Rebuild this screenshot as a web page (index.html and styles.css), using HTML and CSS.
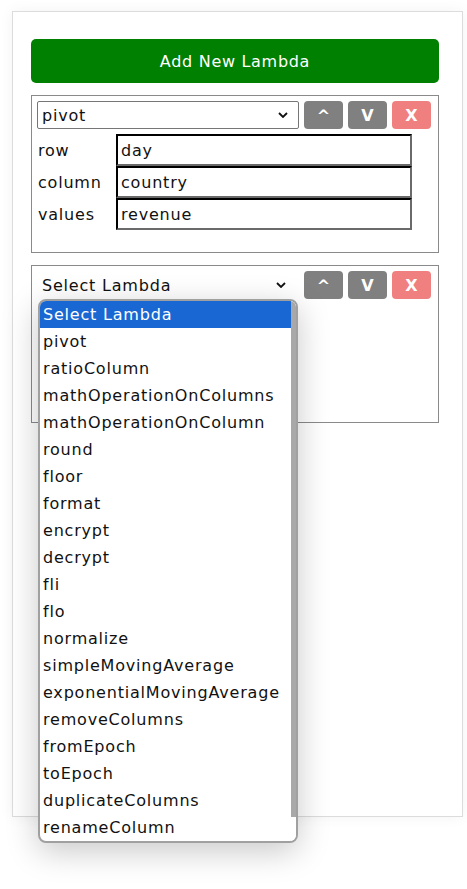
FILE: index.html
```html
<!DOCTYPE html>
<html>
<head>
<meta charset="utf-8">
<link rel="stylesheet" href="styles.css">
</head>
<body>
<div class="panel">
  <button class="add-btn">Add New Lambda</button>

  <div class="card">
    <div class="head">
      <div class="select">
        <span>pivot</span>
        <svg class="chev" width="10" height="6" viewBox="0 0 10 6"><polyline points="1,1 5,5 9,1" fill="none" stroke="#111" stroke-width="1.8"/></svg>
      </div>
      <button class="ctl">^</button>
      <button class="ctl">V</button>
      <button class="ctl del">X</button>
    </div>
    <div class="params">
      <div class="row"><span class="lbl">row</span><div class="inp">day</div></div>
      <div class="row"><span class="lbl">column</span><div class="inp">country</div></div>
      <div class="row"><span class="lbl">values</span><div class="inp">revenue</div></div>
    </div>
  </div>

  <div class="card card2">
    <div class="head">
      <div class="select open">
        <span>Select Lambda</span>
        <svg class="chev" width="10" height="6" viewBox="0 0 10 6"><polyline points="1,1 5,5 9,1" fill="none" stroke="#111" stroke-width="1.8"/></svg>
      </div>
      <button class="ctl">^</button>
      <button class="ctl">V</button>
      <button class="ctl del">X</button>
    </div>
  </div>
</div>

<div class="dropdown">
  <div class="opts">
    <div class="opt sel">Select Lambda</div>
    <div class="opt">pivot</div>
    <div class="opt">ratioColumn</div>
    <div class="opt">mathOperationOnColumns</div>
    <div class="opt">mathOperationOnColumn</div>
    <div class="opt">round</div>
    <div class="opt">floor</div>
    <div class="opt">format</div>
    <div class="opt">encrypt</div>
    <div class="opt">decrypt</div>
    <div class="opt">fli</div>
    <div class="opt">flo</div>
    <div class="opt">normalize</div>
    <div class="opt">simpleMovingAverage</div>
    <div class="opt">exponentialMovingAverage</div>
    <div class="opt">removeColumns</div>
    <div class="opt">fromEpoch</div>
    <div class="opt">toEpoch</div>
    <div class="opt">duplicateColumns</div>
    <div class="opt">renameColumn</div>
  </div>
  <div class="scroll"><div class="thumb"></div></div>
</div>
</body>
</html>
```

FILE: styles.css
```css
* { box-sizing: border-box; }
html, body { margin: 0; padding: 0; background: #fff; }
body {
  font-family: "DejaVu Sans", "Open Sans", sans-serif;
  letter-spacing: 0.8px;
  color: #111;
  width: 467px;
  height: 889px;
  overflow: hidden;
  position: relative;
}
.panel {
  margin: 11px 0 0 12px;
  width: 451px;
  height: 806px;
  border: 1px solid #dcdcdc;
  box-shadow: 0 0 14px rgba(0,0,0,0.05);
  padding: 27px 0 0 18px;
  display: flex;
  flex-direction: column;
  gap: 12px;
}
.add-btn {
  width: 408px;
  height: 44px;
  background: #008000;
  color: #fff;
  border: none;
  border-radius: 5px;
  font-family: inherit;
  font-size: 16px;
  letter-spacing: 0.7px;
  font-weight: 500;
  padding: 0;
}
.card {
  width: 408px;
  height: 158px;
  border: 1px solid #8a8a8a;
  padding: 5px;
}
.head {
  display: flex;
  align-items: center;
  gap: 5px;
}
.select {
  width: 262px;
  height: 28px;
  border: 1px solid #767676;
  border-radius: 2px;
  display: flex;
  align-items: center;
  justify-content: space-between;
  padding: 0 10px 0 4px;
  font-size: 16px;
}
.select.open {
  border-color: transparent;
  width: 260px;
  padding-left: 4px;
  margin-right: 2px;
}
.chev { display: block; }
.ctl {
  width: 39px;
  height: 28px;
  border: none;
  border-radius: 4px;
  background: #808080;
  color: #fff;
  font-family: inherit;
  font-size: 16px;
  font-weight: 600;
  letter-spacing: 0;
  padding: 0;
}
.ctl.del { background: #f08080; }
.params {
  margin-top: 5px;
  display: flex;
  flex-direction: column;
}
.row {
  display: flex;
  align-items: center;
}
.lbl {
  width: 79px;
  padding-left: 1px;
  font-size: 16px;
}
.inp {
  width: 296px;
  height: 32px;
  border: 2px inset #767676;
  border-top-color: #222;
  border-left-color: #222;
  border-right-color: #6a6a6a;
  border-bottom-color: #6a6a6a;
  padding: 0 3px;
  display: flex;
  align-items: center;
  font-size: 16px;
}
.dropdown {
  position: absolute;
  left: 38px;
  top: 299px;
  width: 260px;
  height: 544px;
  border: 2px solid #a0a0a0;
  border-radius: 8px;
  background: #fff;
  box-shadow: 0 8px 32px rgba(0,0,0,0.22);
  overflow: hidden;
  display: flex;
}
.opts {
  flex: 1;
  display: flex;
  flex-direction: column;
}
.opt {
  height: 27px;
  line-height: 27px;
  padding-left: 3px;
  font-size: 16px;
  white-space: nowrap;
  color: #111;
}
.opt.sel {
  background: #1967d2;
  color: #fff;
}
.scroll {
  width: 5px;
  background: #fff;
}
.thumb {
  height: 516px;
  background: #a8a8a8;
}
```
